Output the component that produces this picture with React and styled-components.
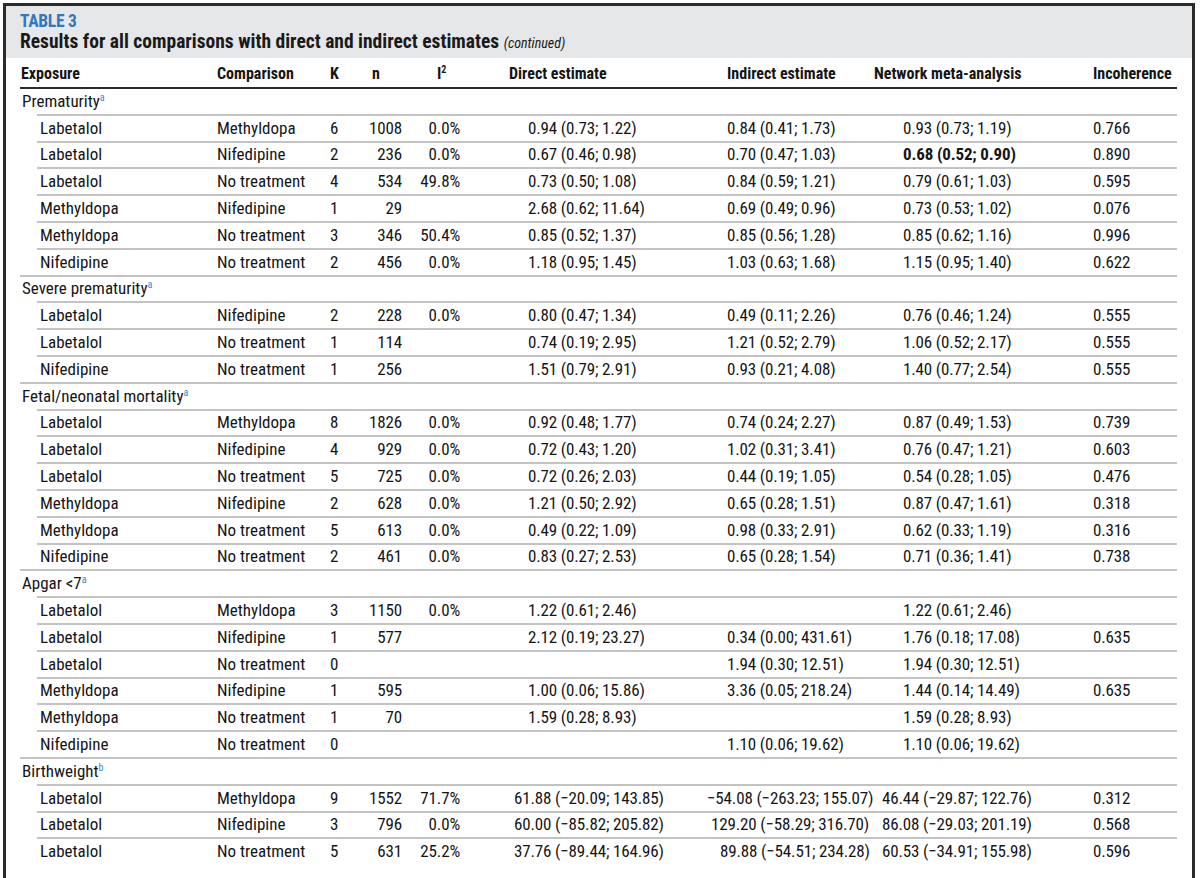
import React from 'react';
import styled, { createGlobalStyle } from 'styled-components';

const GlobalStyle = createGlobalStyle`
    body {
        margin: 0;
        background: #ffffff;
        font-family: Roboto, "Liberation Sans", sans-serif;
        font-stretch: 80%;
        color: #151515;
    }
`;

const COLS = '193px 113px 42px 38px 58px 239px 167px 219px 88px';

// default left offsets for the estimate columns
const PAD = { direct: 64, indirect: 24, network: 33 };

const groups = [
    {
        name: 'Prematurity', note: 'a',
        rows: [
            ['Labetalol', 'Methyldopa', '6', '1008', '0.0%', '0.94 (0.73; 1.22)', '0.84 (0.41; 1.73)', '0.93 (0.73; 1.19)', '0.766'],
            ['Labetalol', 'Nifedipine', '2', '236', '0.0%', '0.67 (0.46; 0.98)', '0.70 (0.47; 1.03)', '0.68 (0.52; 0.90)', '0.890', { bold: true }],
            ['Labetalol', 'No treatment', '4', '534', '49.8%', '0.73 (0.50; 1.08)', '0.84 (0.59; 1.21)', '0.79 (0.61; 1.03)', '0.595'],
            ['Methyldopa', 'Nifedipine', '1', '29', '', '2.68 (0.62; 11.64)', '0.69 (0.49; 0.96)', '0.73 (0.53; 1.02)', '0.076'],
            ['Methyldopa', 'No treatment', '3', '346', '50.4%', '0.85 (0.52; 1.37)', '0.85 (0.56; 1.28)', '0.85 (0.62; 1.16)', '0.996'],
            ['Nifedipine', 'No treatment', '2', '456', '0.0%', '1.18 (0.95; 1.45)', '1.03 (0.63; 1.68)', '1.15 (0.95; 1.40)', '0.622'],
        ],
    },
    {
        name: 'Severe prematurity', note: 'a',
        rows: [
            ['Labetalol', 'Nifedipine', '2', '228', '0.0%', '0.80 (0.47; 1.34)', '0.49 (0.11; 2.26)', '0.76 (0.46; 1.24)', '0.555'],
            ['Labetalol', 'No treatment', '1', '114', '', '0.74 (0.19; 2.95)', '1.21 (0.52; 2.79)', '1.06 (0.52; 2.17)', '0.555'],
            ['Nifedipine', 'No treatment', '1', '256', '', '1.51 (0.79; 2.91)', '0.93 (0.21; 4.08)', '1.40 (0.77; 2.54)', '0.555'],
        ],
    },
    {
        name: 'Fetal/neonatal mortality', note: 'a',
        rows: [
            ['Labetalol', 'Methyldopa', '8', '1826', '0.0%', '0.92 (0.48; 1.77)', '0.74 (0.24; 2.27)', '0.87 (0.49; 1.53)', '0.739'],
            ['Labetalol', 'Nifedipine', '4', '929', '0.0%', '0.72 (0.43; 1.20)', '1.02 (0.31; 3.41)', '0.76 (0.47; 1.21)', '0.603'],
            ['Labetalol', 'No treatment', '5', '725', '0.0%', '0.72 (0.26; 2.03)', '0.44 (0.19; 1.05)', '0.54 (0.28; 1.05)', '0.476'],
            ['Methyldopa', 'Nifedipine', '2', '628', '0.0%', '1.21 (0.50; 2.92)', '0.65 (0.28; 1.51)', '0.87 (0.47; 1.61)', '0.318'],
            ['Methyldopa', 'No treatment', '5', '613', '0.0%', '0.49 (0.22; 1.09)', '0.98 (0.33; 2.91)', '0.62 (0.33; 1.19)', '0.316'],
            ['Nifedipine', 'No treatment', '2', '461', '0.0%', '0.83 (0.27; 2.53)', '0.65 (0.28; 1.54)', '0.71 (0.36; 1.41)', '0.738'],
        ],
    },
    {
        name: 'Apgar <7', note: 'a',
        rows: [
            ['Labetalol', 'Methyldopa', '3', '1150', '0.0%', '1.22 (0.61; 2.46)', '', '1.22 (0.61; 2.46)', ''],
            ['Labetalol', 'Nifedipine', '1', '577', '', '2.12 (0.19; 23.27)', '0.34 (0.00; 431.61)', '1.76 (0.18; 17.08)', '0.635'],
            ['Labetalol', 'No treatment', '0', '', '', '', '1.94 (0.30; 12.51)', '1.94 (0.30; 12.51)', ''],
            ['Methyldopa', 'Nifedipine', '1', '595', '', '1.00 (0.06; 15.86)', '3.36 (0.05; 218.24)', '1.44 (0.14; 14.49)', '0.635'],
            ['Methyldopa', 'No treatment', '1', '70', '', '1.59 (0.28; 8.93)', '', '1.59 (0.28; 8.93)', ''],
            ['Nifedipine', 'No treatment', '0', '', '', '', '1.10 (0.06; 19.62)', '1.10 (0.06; 19.62)', ''],
        ],
    },
    {
        name: 'Birthweight', note: 'b',
        rows: [
            ['Labetalol', 'Methyldopa', '9', '1552', '71.7%', '61.88 (\u221220.09; 143.85)', '\u221254.08 (\u2212263.23; 155.07)', '46.44 (\u221229.87; 122.76)', '0.312', { pads: [50, 4, 12] }],
            ['Labetalol', 'Nifedipine', '3', '796', '0.0%', '60.00 (\u221285.82; 205.82)', '129.20 (\u221258.29; 316.70)', '86.08 (\u221229.03; 201.19)', '0.568', { pads: [50, 8, 12] }],
            ['Labetalol', 'No treatment', '5', '631', '25.2%', '37.76 (\u221289.44; 164.96)', '89.88 (\u221254.51; 234.28)', '60.53 (\u221234.91; 155.98)', '0.596', { pads: [50, 17, 12] }],
        ],
    },
];

export default function App() {
    return (
        <>
            <GlobalStyle />
            <Frame>
                <Caption>
                    <Label>TABLE 3</Label>
                    <Title>
                        Results for all comparisons with direct and indirect estimates <Continued>(continued)</Continued>
                    </Title>
                </Caption>
                <Table>
                    <HeadRow>
                        <HeadCell $pad={1}>Exposure</HeadCell>
                        <HeadCell>Comparison</HeadCell>
                        <HeadCell>K</HeadCell>
                        <HeadCell>n</HeadCell>
                        <HeadCell $pad={31}>I<Sup>2</Sup></HeadCell>
                        <HeadCell $pad={45}>Direct estimate</HeadCell>
                        <HeadCell $pad={24}>Indirect estimate</HeadCell>
                        <HeadCell>Network meta-analysis</HeadCell>
                        <HeadCell>Incoherence</HeadCell>
                    </HeadRow>
                    {groups.map((g, gi) => (
                        <React.Fragment key={g.name}>
                            <GroupRow>
                                <GroupName>
                                    {g.name}<Note>{g.note}</Note>
                                </GroupName>
                            </GroupRow>
                            {g.rows.map((r, ri) => {
                                const opts = r[9] || {};
                                const pads = opts.pads || [PAD.direct, PAD.indirect, PAD.network];
                                const lastRow = ri === g.rows.length - 1;
                                const lastAll = lastRow && gi === groups.length - 1;
                                return (
                                    <DataRow key={ri} $full={lastRow} $none={lastAll}>
                                        <Cell $pad={20}>{r[0]}</Cell>
                                        <Cell>{r[1]}</Cell>
                                        <Num>{r[2]}</Num>
                                        <Num $right>{r[3]}</Num>
                                        <Num $right>{r[4]}</Num>
                                        <Num $pad={pads[0]}>{r[5]}</Num>
                                        <Num $pad={pads[1]}>{r[6]}</Num>
                                        <Num $pad={pads[2]} $bold={opts.bold}>{r[7]}</Num>
                                        <Num>{r[8]}</Num>
                                    </DataRow>
                                );
                            })}
                        </React.Fragment>
                    ))}
                </Table>
            </Frame>
        </>
    );
}

const Frame = styled.div`
    margin: 3px 5px 0 3px;
    border: 3px solid #2b2b2b;
    border-bottom: none;
    padding-bottom: 30px;
`;

const Caption = styled.div`
    background: #e6e7e8;
    height: 52px;
    padding: 5px 0 0 14px;
    box-sizing: border-box;
`;

const Label = styled.div`
    color: #3079bd;
    font-weight: bold;
    font-size: 17.5px;
    font-stretch: 75%;
    letter-spacing: -0.3px;
    line-height: 20px;
`;

const Title = styled.div`
    font-weight: bold;
    font-size: 19.5px;
    line-height: 22px;
    color: #1a1a1a;
`;

const Continued = styled.span`
    font-style: italic;
    font-weight: normal;
    font-size: 14px;
`;

const Table = styled.div`
    margin: 0 15px 0 14px;
    font-size: 17px;
    font-weight: 450;
`;

const HeadRow = styled.div`
    display: grid;
    grid-template-columns: ${COLS};
    height: 31px;
    box-sizing: border-box;
    border-bottom: 2px solid #2b2b2b;
    align-items: center;
`;

const HeadCell = styled.div`
    font-weight: bold;
    font-size: 16px;
    padding-left: ${p => p.$pad ?? 4}px;
    white-space: nowrap;
    padding-top: 1px;
`;

const Sup = styled.sup`
    font-size: 10px;
    vertical-align: 6px;
    line-height: 0;
`;

const lineBg = (start) => `
    background: linear-gradient(#c3c3c3, #c3c3c3) ${start}px 100% / calc(100% - ${start}px) 2px no-repeat;
`;

const GroupRow = styled.div`
    display: flex;
    align-items: center;
    height: 26.8px;
    box-sizing: border-box;
    padding-bottom: 3px;
    ${lineBg(17)}
`;

const GroupName = styled.div`
    padding-left: 2px;
    white-space: nowrap;
`;

const Note = styled.sup`
    color: #3a86c8;
    font-size: 10px;
    vertical-align: 6px;
    line-height: 0;
`;

const DataRow = styled.div`
    display: grid;
    grid-template-columns: ${COLS};
    align-items: center;
    height: 26.8px;
    box-sizing: border-box;
    padding-bottom: 3px;
    ${p => (p.$none ? '' : lineBg(p.$full ? 0 : 17))}
`;

const Cell = styled.div`
    padding-left: ${p => p.$pad ?? 4}px;
    white-space: nowrap;
`;

const Num = styled.div`
    padding-left: ${p => (p.$right ? 0 : p.$pad ?? 4)}px;
    padding-right: ${p => (p.$right ? 4 : 0)}px;
    text-align: ${p => (p.$right ? 'right' : 'left')};
    white-space: nowrap;
    font-stretch: 75%;
    letter-spacing: -0.15px;
    font-weight: ${p => (p.$bold ? 'bold' : 'inherit')};
`;
